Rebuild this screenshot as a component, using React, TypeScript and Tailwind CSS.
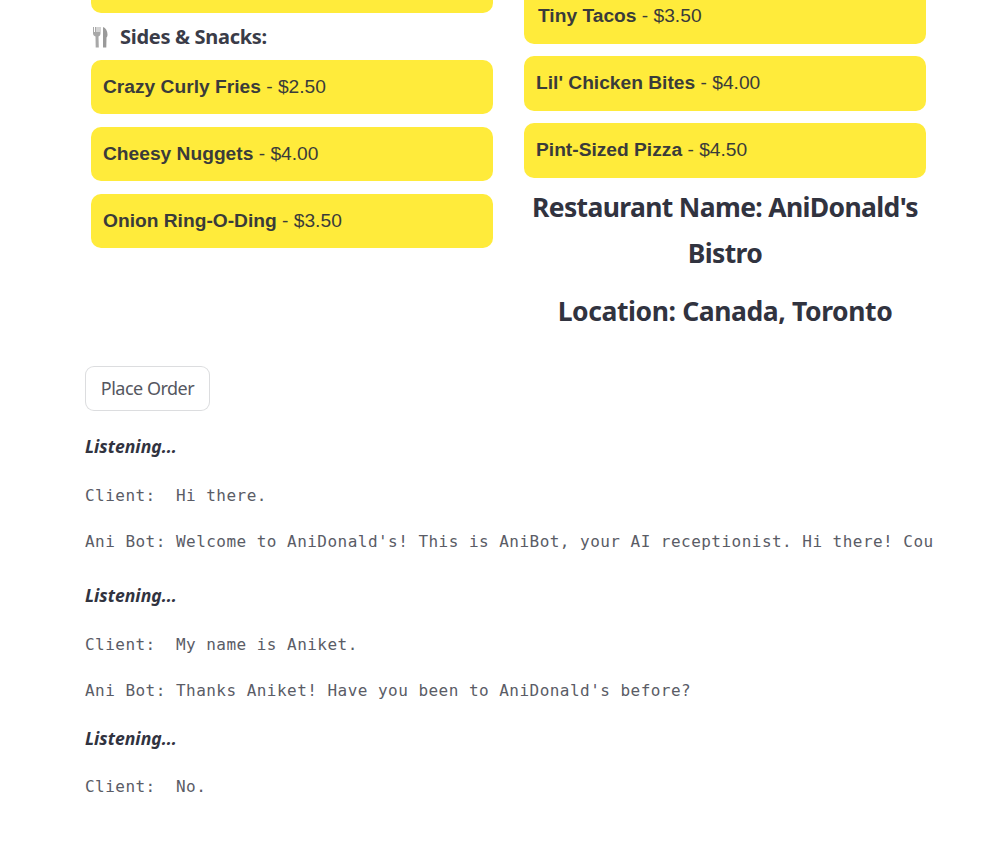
const sans = 'font-["Noto_Sans",sans-serif]';

interface MenuItem {
  name: string;
  price: string;
}

const sides: MenuItem[] = [
  { name: 'Crazy Curly Fries', price: '$2.50' },
  { name: 'Cheesy Nuggets', price: '$4.00' },
  { name: 'Onion Ring-O-Ding', price: '$3.50' },
];

const kids: MenuItem[] = [
  { name: "Lil' Chicken Bites", price: '$4.00' },
  { name: 'Pint-Sized Pizza', price: '$4.50' },
];

function ForkKnife() {
  return (
    <svg width="18" height="22" viewBox="0 0 18 22" className="shrink-0">
      <path d="M2 1h1v5h1V1h1.500v5h1V1h1v5h1V1h1v6.500c0 1.500-1 2.500-2 3L7.800 21.500H4.700L4.500 10.500c-1.200-.5-2.500-1.500-2.500-3z" fill="#a8a8a8" />
      <path d="M12 1c2.800 1 4.500 4 4.500 7.500 0 1.500-.4 2.500-1 3l-.2 10H12z" fill="#9a9a9a" />
    </svg>
  );
}

function Card({ item, className = '' }: { item: MenuItem; className?: string }) {
  return (
    <div className={`flex items-center px-3 rounded-[10px] bg-[#ffeb3b] text-[19.200px] text-[#3a3b3a] font-['Liberation_Sans',sans-serif] ${className}`}>
      <span>
        <b className="font-bold">{item.name}</b> - {item.price}
      </span>
    </div>
  );
}

function Transcript({ lines }: { lines: string[] }) {
  return (
    <div className="flex flex-col gap-[21px]">
      {lines.map((line) => (
        <pre key={line} className="h-[25px] leading-[25px] overflow-hidden text-[16px] tracking-[0.47px] text-[#5a5c66] font-['DejaVu_Sans_Mono',monospace]">
          {line}
        </pre>
      ))}
    </div>
  );
}

function Listening({ className = '' }: { className?: string }) {
  return (
    <p className={`h-[24px] leading-[24px] text-[17.600px] font-bold italic text-[#31333f] ${className}`}>
      Listening...
    </p>
  );
}

export default function App() {
  return (
    <div className={`h-[862px] overflow-hidden bg-white ${sans}`}>
      <div className="w-[848px] ml-[85px]">
        <div className="flex gap-[31px] pl-[6px] pr-[7px]">
          <div className="w-[402px]">
            <div className="h-[54px] -mt-[41px] rounded-[10px] bg-[#ffeb3b]" />
            <h3 className="h-[47px] flex items-center gap-[11px] text-[20px] font-bold text-[#3a3c48] tracking-[-0.3px]">
              <ForkKnife />
              Sides &amp; Snacks:
            </h3>
            <div className="flex flex-col gap-[13px]">
              {sides.map((item) => (
                <Card key={item.name} item={item} className="h-[54px]" />
              ))}
            </div>
          </div>
          <div className="w-[402px]">
            <Card item={{ name: 'Tiny Tacos', price: '$3.50' }} className="h-[54.500px] -mt-[11px] pl-[14px]" />
            <div className="flex flex-col gap-[12.500px] mt-[12.500px]">
              {kids.map((item) => (
                <Card key={item.name} item={item} className="h-[54.500px]" />
              ))}
            </div>
            <h2 className="mt-[6px] text-center text-[26.500px] leading-[46px] font-bold text-[#31333f] tracking-[-0.65px]">
              Restaurant Name: AniDonald's Bistro
            </h2>
            <h2 className="mt-[12px] text-center text-[26.500px] leading-[46px] font-bold text-[#31333f] tracking-[-0.4px]">
              Location: Canada, Toronto
            </h2>
          </div>
        </div>

        <button className="block mt-[32px] w-[125px] h-[45px] rounded-[9px] border border-[#31333f2b] bg-white text-[18px] text-[#55575f] tracking-[-0.5px]">
          Place Order
        </button>
        <Listening className="mt-[23px]" />
        <div className="mt-[25px]">
          <Transcript
            lines={[
              'Client:  Hi there.',
              "Ani Bot: Welcome to AniDonald's! This is AniBot, your AI receptionist. Hi there! Could I get your name?",
            ]}
          />
        </div>
        <Listening className="mt-[29px]" />
        <div className="mt-[25px]">
          <Transcript
            lines={['Client:  My name is Aniket.', "Ani Bot: Thanks Aniket! Have you been to AniDonald's before?"]}
          />
        </div>
        <Listening className="mt-[23px]" />
        <div className="mt-[24px]">
          <Transcript lines={['Client:  No.']} />
        </div>
      </div>
    </div>
  );
}
